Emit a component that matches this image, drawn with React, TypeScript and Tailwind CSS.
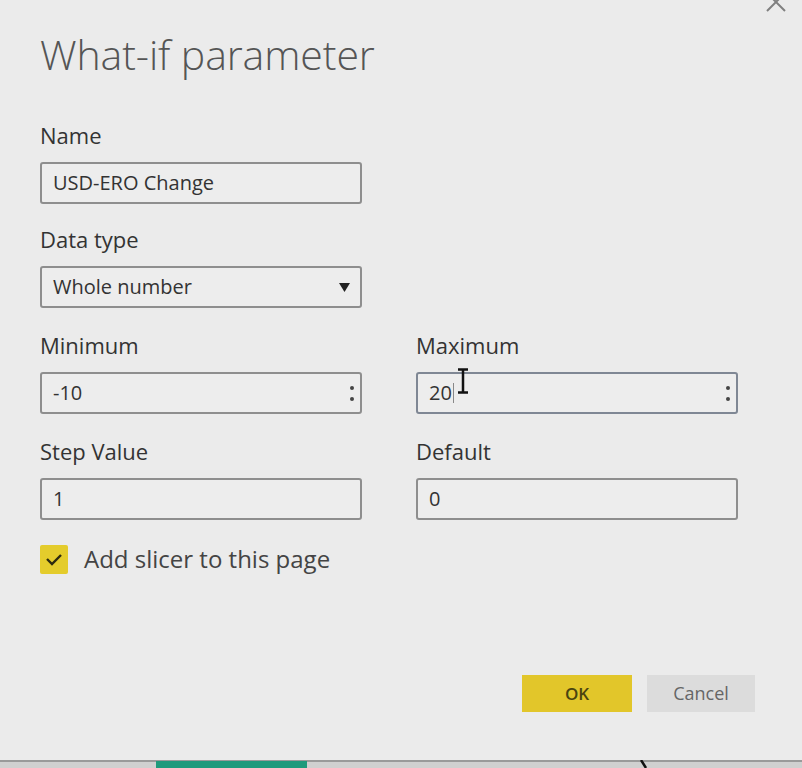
import React from "react";

const font = { fontFamily: '"Open Sans", "Noto Sans", sans-serif' };

function Spinner() {
  return (
    <div className="flex flex-col items-center justify-center gap-[7px] pr-[6px]">
      <span className="block w-[4px] h-[4px] rounded-full bg-[#444]" />
      <span className="block w-[4px] h-[4px] rounded-full bg-[#444]" />
    </div>
  );
}

function Field({
  value,
  spinner,
  focus,
  caret,
}: {
  value: string;
  spinner?: boolean;
  focus?: boolean;
  caret?: boolean;
}) {
  return (
    <div
      className={
        "relative flex items-center justify-between h-[42px] rounded-[3px] border-2 bg-[#ededed] pl-[11px] " +
        (focus ? "border-[#7f8794]" : "border-[#8e8e8e]")
      }
    >
      <span className="text-[20px] text-[#333] flex items-center">
        {value}
        {caret && <span className="inline-block w-[1px] h-[20px] bg-[#888] ml-[1px]" />}
      </span>
      {spinner && <Spinner />}
    </div>
  );
}

function Label({ children }: { children: React.ReactNode }) {
  return <div className="h-[28px] leading-[22px] text-[22px] text-[#333] mb-[10px]">{children}</div>;
}

export default function App() {
  return (
    <div className="relative w-[802px] h-[768px] bg-[#ebebeb] overflow-hidden" style={font}>
      {/* close X */}
      <svg className="absolute left-[764px] top-[-8px]" width="24" height="20" viewBox="0 0 24 20">
        <path d="M3 1 L21 19 M21 1 L3 19" stroke="#808080" strokeWidth="2" fill="none" />
      </svg>

      <div className="pl-[40px] pt-[28px] w-[738px]">
        <div className="text-[41px] font-light leading-[52px] text-[#555] tracking-[-0.1px]">What-if parameter</div>

        <div className="mt-[44px] w-[322px]">
          <Label>Name</Label>
          <Field value="USD-ERO Change" />
        </div>

        <div className="mt-[24px] w-[322px]">
          <Label>Data type</Label>
          <div className="flex items-center justify-between h-[42px] rounded-[3px] border-2 border-[#8e8e8e] bg-[#ededed] pl-[11px] pr-[10px]">
            <span className="text-[20px] text-[#333]">Whole number</span>
            <svg width="11" height="9" viewBox="0 0 11 9">
              <path d="M0 0 H11 L5.5 9 Z" fill="#222" />
            </svg>
          </div>
        </div>

        <div className="mt-[26px] grid grid-cols-[322px_322px] gap-x-[54px] gap-y-[26px]">
          <div>
            <Label>Minimum</Label>
            <Field value="-10" spinner />
          </div>
          <div className="relative">
            <Label>Maximum</Label>
            <Field value="20" spinner focus caret />
            {/* I-beam cursor */}
            <svg className="absolute left-[40px] top-[34px]" width="14" height="26" viewBox="0 0 14 26">
              <path d="M2 1.5 H12 M7 1.5 V24.5 M2 24.5 H12" stroke="#111" strokeWidth="2.5" fill="none" />
            </svg>
          </div>
          <div>
            <Label>Step Value</Label>
            <Field value="1" />
          </div>
          <div>
            <Label>Default</Label>
            <Field value="0" />
          </div>
        </div>

        <div className="mt-[21px] flex items-center gap-[16px]">
          <div className="w-[28px] h-[29px] rounded-[2px] bg-[#e4cc2c] flex items-center justify-center">
            <svg width="18" height="14" viewBox="0 0 18 14">
              <path d="M2 7 L7 12 L16 3" stroke="#2c2a10" strokeWidth="2.4" fill="none" />
            </svg>
          </div>
          <span className="text-[24px] text-[#444]">Add slicer to this page</span>
        </div>

        <div className="mt-[98px] flex justify-end gap-[15px] w-[755px] ml-[-40px]">
          <div className="w-[110px] h-[37px] bg-[#e2c62a] flex items-center justify-center text-[17px] font-semibold text-[#4a4410]">
            OK
          </div>
          <div className="w-[108px] h-[37px] bg-[#dcdcdc] flex items-center justify-center text-[18px] text-[#666]">
            Cancel
          </div>
        </div>
      </div>

      {/* bottom edge */}
      <div className="absolute left-0 right-0 top-[760px] h-[8px] bg-[#d0d0d0] border-t-2 border-[#9a9a9a]" />
      <div className="absolute left-[156px] w-[151px] top-[761px] h-[7px] bg-[#1f9a7c]" />
      <svg className="absolute left-[640px] top-[760px]" width="12" height="8" viewBox="0 0 12 8">
        <path d="M1 0 L6 8" stroke="#111" strokeWidth="2.5" />
      </svg>
    </div>
  );
}
